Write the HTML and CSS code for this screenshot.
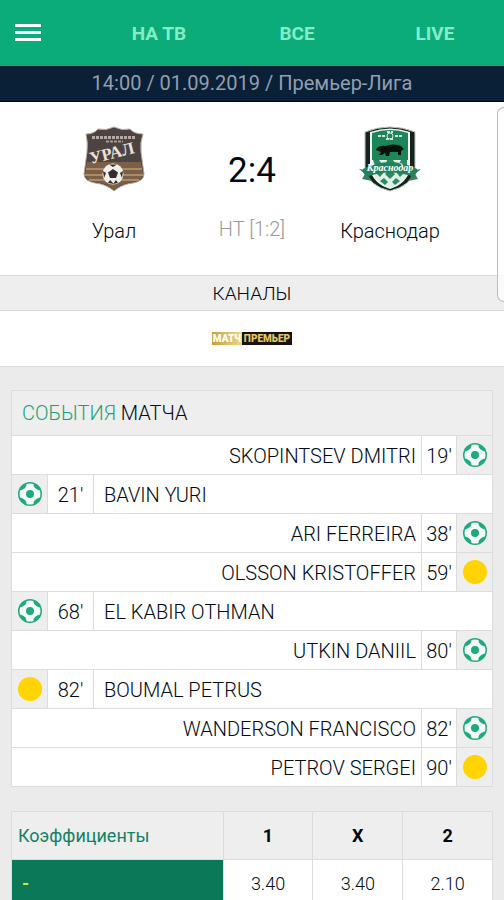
FILE: index.html
```html
<!DOCTYPE html>
<html lang="ru">
<head>
<meta charset="utf-8">
<meta name="viewport" content="width=device-width, initial-scale=1">
<title>Урал – Краснодар</title>
<link rel="stylesheet" href="styles.css">
</head>
<body>
<svg class="defs" aria-hidden="true">
  <symbol id="ball" viewBox="0 0 24 24">
    <circle cx="12" cy="12" r="12" fill="#1fa97c"/>
    <path fill="#f4fbf8" d="M8.500 2Q12 1 15.500 2C15.500 5 17 7 22 8.500Q23 12 22 15.500C17 17 15.500 19 15.500 22Q12 23 8.500 22C8.500 19 7 17 2 15.500Q1 12 2 8.500C7 7 8.500 5 8.500 2Z"/>
    <circle cx="12" cy="12" r="4" fill="#1fa97c"/>
  </symbol>
</svg>

<header class="topbar">
  <button class="menu" type="button" aria-label="Меню"><span></span><span></span><span></span></button>
  <nav class="tabs">
    <a href="#tv">НА ТВ</a>
    <a href="#all">ВСЕ</a>
    <a href="#live">LIVE</a>
  </nav>
</header>
<div class="info">14:00 / 01.09.2019 / Премьер-Лига</div>

<main>
  <section class="match">
    <div class="team">
      <svg class="crest" viewBox="0 0 64 66" role="img" aria-label="Урал">
        <path d="M4 8Q12 8 16 3Q24 5 32 1Q40 5 48 3Q52 8 61 8Q58 16 59 26L62 48Q62 55 51 57Q40 58 32 65Q24 58 13 57Q2 55 2 48L5 26Q6 16 4 8Z" fill="#4c4443" stroke="#b9aa98" stroke-width="1"/>
        <path d="M5 36H59L61 48Q61 54 50 56Q40 57 32 64Q24 57 14 56Q3 54 3 48Z" fill="#7a6048"/>
        <path d="M4 43H60M3 49H61M7 54H57" stroke="#ad8a66" stroke-width="2"/>
        <path d="M10 11.500H54" stroke="#b5aba4" stroke-width="3" stroke-dasharray="3 1"/>
        <path d="M24 15.500H41" stroke="#a59b93" stroke-width="2" stroke-dasharray="3 1"/>
        <text class="crest-letters" x="9" y="38" font-size="17" transform="rotate(-14 9 38)">УРАЛ</text>
        <circle cx="31" cy="48" r="10.500" fill="#f2eee9"/>
        <path d="M31 43L36 46.500L34 52H28L26 46.500ZM27 38.500H35L31 41ZM21 45L24 47L22 52ZM41 45L38 47L40 52ZM26 57L28 54L32 58ZM36 57L34 54L31 58Z" fill="#332e2c"/>
      </svg>
      <div class="team-name">Урал</div>
    </div>
    <div class="result">
      <div class="score">2:4</div>
      <div class="half">HT [1:2]</div>
    </div>
    <div class="team">
      <svg class="crest" viewBox="0 0 64 66" role="img" aria-label="Краснодар">
        <path d="M7 6Q32 -4 57 6V44Q53 60 32 65Q11 60 7 44Z" fill="#16231c" stroke="#b7c9bf" stroke-width="1"/>
        <path d="M12 6Q32 -1 52 6V44Q48 58 32 63Q16 58 12 44Z" fill="#f1f6f3"/>
        <path d="M14 7Q32 1 50 7V34H14Z" fill="#1b8659"/>
        <path d="M14 35H50V44Q47 56 32 62Q17 56 14 44Z" fill="#dff0e7"/>
        <path d="M15 34h6l3 4-3 4-4-3zM29 34h6l3 4-5 5-5-5zM43 34h6v5l-4 3-4-4zM22 42l4 4-4 5-5-5zM32 43l5 5-5 5-5-5zM42 42l5 4-5 5-4-5zM26 52l4 4-3 3-5-4zM38 52l4 3-5 4-3-3z" fill="#2b8a62"/>
        <path d="M20 10H27M37 10H44M29 6H35M28 13H36" stroke="#cfe8dc" stroke-width="2" stroke-dasharray="3 1"/>
        <circle cx="32" cy="10" r="3" fill="none" stroke="#cfe8dc"/>
        <path d="M19 22Q23 19 27 20Q36 17 43 20L46 23L43 25V29H40V26H32L31 30H28L27 27L24 29H21L23 26L18 24Z" fill="#07120c"/>
        <path d="M1 43L14 45L10 49L14 55L4 53L7 48ZM63 43L50 45L54 49L50 55L60 53L57 48Z" fill="#3d7f63"/>
        <path d="M5 46V43Q32 29 59 43V46L56 51Q32 42 8 51Z" fill="#20825b"/>
        <text class="crest-script" x="32" y="45" text-anchor="middle" font-size="10">Краснодар</text>
      </svg>
      <div class="team-name">Краснодар</div>
    </div>
  </section>

  <h2 class="strip">КАНАЛЫ</h2>
  <div class="channels">
    <a class="channel" href="#channel"><span class="channel-a">МАТЧ</span><span class="channel-b">ПРЕМЬЕР</span></a>
  </div>

  <section class="card">
    <h2 class="card-title"><span>СОБЫТИЯ</span> МАТЧА</h2>
    <ol class="events">
      <li class="event away"><span class="kind"><svg><use href="#ball"/></svg></span><span class="time">19'</span><span class="player">SKOPINTSEV DMITRI</span></li>
      <li class="event"><span class="kind"><svg><use href="#ball"/></svg></span><span class="time">21'</span><span class="player">BAVIN YURI</span></li>
      <li class="event away"><span class="kind"><svg><use href="#ball"/></svg></span><span class="time">38'</span><span class="player">ARI FERREIRA</span></li>
      <li class="event away"><span class="kind"><i class="yellow"></i></span><span class="time">59'</span><span class="player">OLSSON KRISTOFFER</span></li>
      <li class="event"><span class="kind"><svg><use href="#ball"/></svg></span><span class="time">68'</span><span class="player">EL KABIR OTHMAN</span></li>
      <li class="event away"><span class="kind"><svg><use href="#ball"/></svg></span><span class="time">80'</span><span class="player">UTKIN DANIIL</span></li>
      <li class="event"><span class="kind"><i class="yellow"></i></span><span class="time">82'</span><span class="player">BOUMAL PETRUS</span></li>
      <li class="event away"><span class="kind"><svg><use href="#ball"/></svg></span><span class="time">82'</span><span class="player">WANDERSON FRANCISCO</span></li>
      <li class="event away"><span class="kind"><i class="yellow"></i></span><span class="time">90'</span><span class="player">PETROV SERGEI</span></li>
    </ol>
  </section>

  <table class="odds">
    <thead>
      <tr><th class="odds-name" scope="col">Коэффициенты</th><th scope="col">1</th><th scope="col">X</th><th scope="col">2</th></tr>
    </thead>
    <tbody>
      <tr><th class="bookmaker" scope="row">-</th><td>3.40</td><td>3.40</td><td>2.10</td></tr>
    </tbody>
  </table>
</main>
<div class="edge-panel"></div>
</body>
</html>
```

FILE: styles.css
```css
* { box-sizing: border-box; }

body {
  position: relative;
  margin: 0;
  background: #ebebeb;
  color: #000814;
  font-family: Roboto, "Liberation Sans", sans-serif;
  font-size: 19px;
  overflow-x: hidden;
}

.defs { position: absolute; width: 0; height: 0; }

.topbar {
  display: flex;
  height: 66px;
  background: #0bab7a;
}

.menu {
  display: flex;
  flex-direction: column;
  justify-content: center;
  gap: 4px;
  width: 90px;
  padding: 0 15px 2px;
  border: 0;
  background: none;
}

.menu span {
  width: 26px;
  height: 3px;
  background: #f2fffa;
}

.tabs {
  flex: 1;
  display: grid;
  grid-template-columns: repeat(3, 1fr);
  align-items: center;
  text-align: center;
}

.tabs a {
  color: #86ecc8;
  font-weight: 700;
  text-decoration: none;
}

.info {
  height: 36px;
  border-bottom: 1px solid #000;
  background: #0a2036;
  color: #929fb0;
  font-size: 20px;
  line-height: 34px;
  text-align: center;
}

.match {
  display: grid;
  grid-template-columns: repeat(3, 1fr);
  height: 173px;
  padding: 24px 45px 0;
  background: #fff;
  text-align: center;
}

.crest { display: block; width: 64px; height: 66px; margin: 0 auto 26px; }

.crest-letters {
  fill: #eee2d4;
  font-family: "Liberation Serif", serif;
  font-weight: 700;
}

.crest-script {
  fill: #fff;
  font-family: "Liberation Serif", serif;
  font-style: italic;
  font-weight: 700;
}

.team-name { font-size: 20px; font-weight: 300; line-height: 26px; }

.score {
  margin: 25px 0 26px;
  font-size: 35px;
  line-height: 40px;
}

.half { color: #999; font-size: 20px; font-weight: 300; line-height: 24px; }

.strip {
  height: 36px;
  margin: 0;
  border: solid #d9d9d9;
  border-width: 1px 0;
  background: #eee;
  font-size: 19px;
  font-weight: 300;
  line-height: 36px;
  text-align: center;
}

.channels {
  display: flex;
  align-items: center;
  justify-content: center;
  height: 56px;
  border-bottom: 1px solid #ddd;
  background: #fff;
}

.channel {
  display: flex;
  font-size: 10px;
  font-weight: 900;
  line-height: 13px;
  text-align: center;
  text-decoration: none;
}

.channel-a {
  width: 30px;
  background: linear-gradient(90deg, #c9a03a, #ecd78b);
  color: #fff;
}

.channel-b {
  width: 50px;
  background: #17130a;
  color: #e5c763;
}

.card {
  margin: 23px 11px 24px;
  border: 1px solid #dcdcdc;
  border-bottom: 0;
  background: #fff;
}

.card-title {
  margin: 0;
  padding: 0 10px;
  border-bottom: 1px solid #dcdcdc;
  background: #eee;
  font-size: 20px;
  font-weight: 300;
  line-height: 44px;
}

.card-title span { color: #16a477; }

.events { margin: 0; padding: 0; list-style: none; }

.event {
  display: flex;
  height: 39px;
  border-bottom: 1px solid #dcdcdc;
  font-size: 20px;
  font-weight: 300;
  line-height: 41px;
}

.kind {
  display: flex;
  align-items: center;
  justify-content: center;
  width: 35px;
  background: #eee;
}

.kind svg, .yellow { width: 24px; height: 24px; }

.yellow { border-radius: 50%; background: #ffd400; }

.time {
  width: 47px;
  border: solid #dcdcdc;
  border-width: 0 1px;
  text-align: center;
}

.player { padding: 0 10px; }

.away { flex-direction: row-reverse; }
.away .time { width: 36px; }
.away .player { padding: 0 5px; }

.odds {
  width: calc(100% - 22px);
  margin: 0 11px;
  border-collapse: collapse;
  table-layout: fixed;
  background: #fff;
  font-size: 18px;
  text-align: center;
}

.odds th, .odds td {
  height: 48px;
  padding: 0;
  border: 1px solid #dcdcdc;
}

.odds td { font-weight: 300; }

.odds thead th { background: #eee; }

.odds .odds-name {
  width: 44%;
  padding: 0 6px;
  color: #128066;
  font-weight: 400;
  text-align: left;
}

.odds .bookmaker {
  padding: 0 10px;
  background: #0b7858;
  color: #d5e34a;
  text-align: left;
}

.edge-panel {
  position: absolute;
  top: 107px;
  right: 0;
  width: 7px;
  height: 195px;
  border: 1px solid #bbb;
  border-right: 0;
  border-radius: 7px 0 0 7px;
  background: rgba(255, 255, 255, .7);
}
```
